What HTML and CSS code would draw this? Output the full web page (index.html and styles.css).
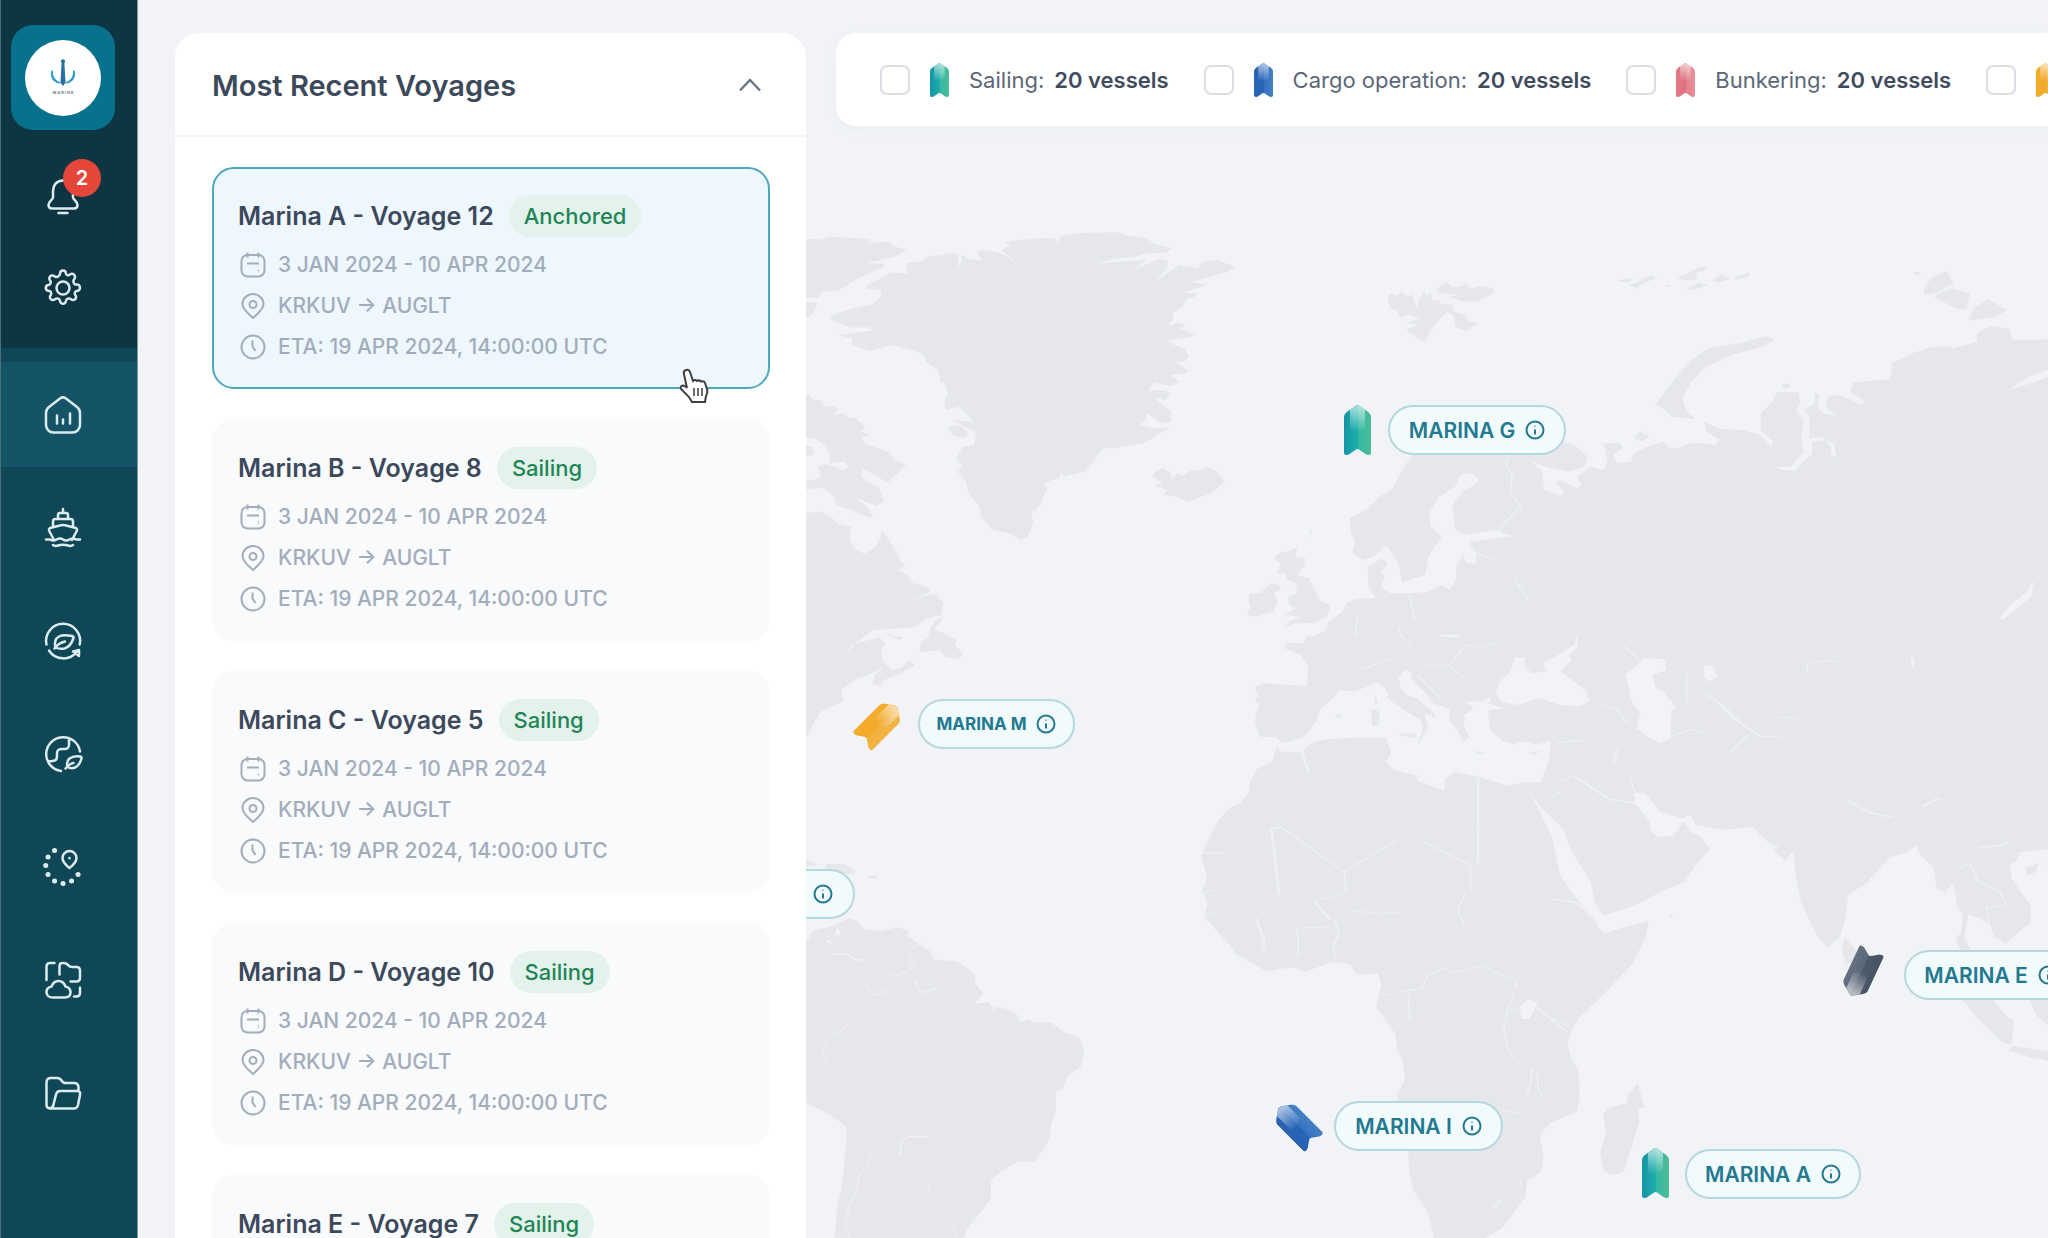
FILE: index.html
```html
<!DOCTYPE html>
<html lang="en">
<head>
<meta charset="utf-8">
<title>Marine fleet overview</title>
<link rel="stylesheet" href="styles.css">
</head>
<body>
<svg class="defs" aria-hidden="true">
  <defs>
    <linearGradient id="g-teal"><stop offset="0" stop-color="#1593a6"/><stop offset=".5" stop-color="#1cafab"/><stop offset=".55" stop-color="#35b9a4"/><stop offset="1" stop-color="#4dbb98"/></linearGradient>
    <linearGradient id="g-blue"><stop offset="0" stop-color="#2a62b0"/><stop offset=".5" stop-color="#2565b8"/><stop offset=".55" stop-color="#3672be"/><stop offset="1" stop-color="#4680c6"/></linearGradient>
    <linearGradient id="g-pink"><stop offset="0" stop-color="#e57885"/><stop offset=".5" stop-color="#dd7380"/><stop offset=".55" stop-color="#e38390"/><stop offset="1" stop-color="#e88f99"/></linearGradient>
    <linearGradient id="g-gold"><stop offset="0" stop-color="#f3ac2e"/><stop offset=".5" stop-color="#f2a927"/><stop offset=".55" stop-color="#f1b13c"/><stop offset="1" stop-color="#f2b548"/></linearGradient>
    <linearGradient id="g-slate"><stop offset="0" stop-color="#475465"/><stop offset=".5" stop-color="#4b5868"/><stop offset=".55" stop-color="#5b6878"/><stop offset="1" stop-color="#667282"/></linearGradient>
    <linearGradient id="g-shine" x1="0" y1="0" x2="0" y2="1"><stop offset="0" stop-color="#fff" stop-opacity=".65"/><stop offset="1" stop-color="#fff" stop-opacity="0"/></linearGradient>
    <path id="ribbon" d="M13.500 0Q14.500 0 15.500 1L23.500 6.500Q27 9 27 12V47.500Q27 50 24.500 50Q22 50 20 48L15 44.500Q13.500 43.500 12 44.500L7 48Q5 50 2.500 50Q0 50 0 47.500V12Q0 9 3.500 6.500L11.500 1Q12.500 0 13.500 0Z"/>
    <path id="shine" d="M13.500 0L21 5V22Q13 30 6 24V5Z" fill="url(#g-shine)"/>
    <symbol id="i-info" viewBox="0 0 20 20"><circle cx="10" cy="10" r="8.500"/><path d="M10 9.500v5M10 5.800v.6"/></symbol>
    <symbol id="i-cal" viewBox="0 0 26 26"><rect x="1.500" y="3" width="23" height="21.500" rx="6"/><path d="M7.500 .5v5M18.500 .5v5M7 11.500h12M18 18.500h1"/></symbol>
    <symbol id="i-pin" viewBox="0 0 26 26"><path d="M13 25C6.500 19.500 2.500 15.500 2.500 11a10.500 10 0 0 1 21 0c0 4.500-4 8.500-10.500 14z"/><circle cx="13" cy="11.500" r="3.500"/></symbol>
    <symbol id="i-clock" viewBox="0 0 26 26"><circle cx="13" cy="13" r="11.500"/><path d="M12.500 6.500v6l3 4.500"/></symbol>
  </defs>
</svg>

<div class="app">
  <nav class="sidebar" aria-label="Main">
    <div class="sidebar-top">
      <a class="logo" href="#" aria-label="Marine">
        <svg viewBox="0 0 75 75" aria-hidden="true">
          <circle cx="37.500" cy="37.500" r="37.500" fill="#fff"/>
          <path d="M36.300 20h2.400l1.300 22-2.500 3.500L35 42z" fill="#2a6f9e"/><circle cx="37.500" cy="21" r="2" fill="#2a6f9e"/>
          <path d="M27 30c-.5 7 4 11 8 12.500-5 0-9-3.500-9-10zM48 30c.5 7-4 11-8 12.500 5 0 9-3.500 9-10z" fill="#2c9bcf" stroke="#2c9bcf" stroke-width="1"/>
          <text x="37.500" y="53" text-anchor="middle" class="logo-name">M A R I N E</text>
        </svg>
      </a>
      <button class="side-btn bell" aria-label="Notifications, 2 new">
        <svg class="icon" viewBox="0 0 36 36"><path d="M18 2.500C11.500 2.500 8 7.500 8 13v6.500c0 2-4.500 4-4.500 7.500 0 2.500 1.500 3.500 3.500 3.500h22c2 0 3.500-1 3.500-3.500 0-3.500-4.500-5.500-4.500-7.500V13c0-5.500-3.500-10.500-10-10.500zM13.500 35h9"/></svg>
        <span class="badge">2</span>
      </button>
      <button class="side-btn" aria-label="Settings">
        <svg class="icon" viewBox="0 0 36 36"><path d="M15.200 3.200a2.800 2.800 0 0 1 5.600 0c.2 1.800 2.300 2.700 3.800 1.600a2.900 2.900 0 0 1 4.600 4.300c-1.500 1.800-.8 4.700 1.400 5.500a2.900 2.900 0 0 1 2.200 6.200c-2.700.2-3.800 2-2.600 4a2.900 2.900 0 0 1-4.300 4.300c-1.700-1.400-4.600-.4-5 1.800a2.900 2.900 0 0 1-5.800 0c-.4-2.200-3.300-3.200-5-1.800a2.900 2.900 0 0 1-4.300-4.300c1.200-2 .1-3.800-2.600-4a2.900 2.900 0 0 1 0-5.700c2.400-.4 3.300-2.700 2-4.500a2.900 2.900 0 0 1 4.200-4.300c2 1.400 5.400.2 5.800-3.100z"/><circle cx="18" cy="18" r="6.500"/></svg>
      </button>
    </div>
    <ul class="side-list">
      <li><a class="side-link active" href="#" aria-label="Dashboard"><svg class="icon" viewBox="0 0 36 36"><path d="M15 1.500a5 5 0 0 1 6 0l11 8.500a7.500 7.500 0 0 1 3 6v12a7.500 7.500 0 0 1-7.500 7.500h-19A7.500 7.500 0 0 1 1 28V16a7.500 7.500 0 0 1 3-6z"/><path d="M12 18.500v8M18 22.500v4M25 16.500v10"/></svg></a></li>
      <li><a class="side-link" href="#" aria-label="Vessels"><svg class="icon" viewBox="0 0 36 36"><path d="M18 -1v3.500M13 9V5q0-2 2-2h6q2 0 2 2v4M12 9h12M8 16v-4.500Q8 9 10.500 9h15Q28 9 28 11.500V16M9 30l-4.500-8.500Q3 18.500 6 17.700l10-2.500q2-.5 4 0l10 2.500q3 .8 1.500 3.800L27 30M1 29.500h4q3 2 6.500 0t6.500 0 6.500 0 6.500 0h4M8 35q2 1.500 5 .5 5-1.500 10 0 3 1 5-.5"/></svg></a></li>
      <li><a class="side-link" href="#" aria-label="Emissions"><svg class="icon" viewBox="0 0 36 36"><path d="M1.500 21.500A17 17 0 1 1 34.700 21.500M4 27.500A17 17 0 0 0 32 28.500M28 28.500l6-1.500v6zM10.500 24.500q-2-8 3.500-11 4-2 13-.5 2 .5 1.500 2-3 9-9 10.500-5 1-9-1zM9.500 25.500q4-5.500 10.500-7"/></svg></a></li>
      <li><a class="side-link" href="#" aria-label="Environment"><svg class="icon" viewBox="0 0 36 36"><path d="M35 15.500A17 17 0 1 0 16 35M24 2.500v6q0 5-5.500 4.500-6.500-.5-6.500 4v3q0 5-4.500 5-3 .5-5-.5M22.500 31q-1.500-5.500 2-8.500 4-3 10.500-2 2 .3 1.500 2-2 7-6.500 9-4 1.500-7.500-.5zM20.500 32.500q4-5 8-5.500"/></svg></a></li>
      <li><a class="side-link" href="#" aria-label="Routes"><svg class="icon" viewBox="0 0 36 36"><path d="M24.500 19q-7-5.500-7-10a7 7 0 0 1 14 0q0 4.500-7 10zM24.500 9v.2"/><path class="dots" d="M9.500 1.500h.1M3 8h.1M.7 16.500h.1M3 25.500h.1M9.500 32h.1M18 34.500h.1M26.500 32h.1M33 25.500h.1"/></svg></a></li>
      <li><a class="side-link" href="#" aria-label="Cloud files"><svg class="icon" viewBox="0 0 36 36"><path d="M1.500 18V4.500Q1.500 1 5 1h4.500M14.500 12.500V4q0-3 3-3 4-.3 6 2.500 1 1.500 4 1.500h4q3.500 0 3.500 3.500v7q0 4-3.500 4H25.500M35 25.500v5q0 4-3.500 4H29M8 35.500q-6 0-6.500-5-.2-5 5-6 2-5.500 7-5.500t7 5.500q5 1 5 6t-6 5z"/></svg></a></li>
      <li><a class="side-link" href="#" aria-label="Documents"><svg class="icon" viewBox="0 0 36 36"><path d="M5 33.500Q1.500 33 1.500 30V7.500Q1.500 3 6 3h6q3 0 4.500 2.500T20.500 8H29q4 0 4.500 4v4M5 33.500q3-.5 3.500-4L11 19.500q1-3.500 4-3.500h17q4 0 3 4l-2 10q-.8 3.500-4 3.500z"/></svg></a></li>
    </ul>
  </nav>

  <main class="main">
    <svg class="map" viewBox="137 0 1911 1238" preserveAspectRatio="xMinYMin slice" aria-hidden="true">
      <!-- Greenland, Arctic Canada, Labrador, Iceland -->
      <g class="land" transform="translate(800 200) scale(.3333)">
        <path d="M315,190 365,183 375,172 460,158 472,165 470,203 483,180 480,165 505,178 545,182 525,155 550,150 600,160 648,190 600,150 630,138 610,125 720,115 760,113 770,127 780,107 850,98 950,97 980,107 1040,115 1055,130 1112,145 1095,158 1040,160 1000,170 940,176 890,192 940,186 1035,180 997,211 1070,178 1100,180 1100,200 1065,242 1135,195 1190,205 1210,183 1250,181 1303,200 1280,215 1210,235 1170,245 1218,255 1190,265 1140,280 1190,278 1180,290 1155,300 1145,320 1118,335 1115,360 1103,377 1130,368 1158,377 1135,385 1182,405 1165,412 1095,420 1120,435 1150,445 1163,470 1155,483 1120,485 1163,512 1150,520 1108,525 1137,547 1110,558 1060,547 1042,573 1080,570 1107,578 1095,600 1060,595 1110,635 1110,665 1085,670 1035,640 1035,660 1015,675 1060,685 1105,683 1030,730 940,745 905,745 875,790 850,815 785,830 782,812 775,835 745,843 728,855 740,860 720,910 700,935 690,930 697,965 680,1010 660,1020 625,1000 575,990 540,950 535,920 500,875 498,850 470,815 485,800 465,775 485,740 520,735 525,695 500,685 455,660 520,665 475,620 435,630 430,600 442,585 430,550 418,545 412,510 375,485 365,462 330,450 270,435 205,453 155,435 152,415 112,405 215,392 205,382 150,383 115,370 85,353 100,343 155,325 215,313 240,290 240,272 195,265 200,255 270,218 320,220Z"/>
        <path d="M442,685 460,675 485,680 502,702 490,716 455,705Z"/>
        <path d="M0,118 60,118 85,110 140,113 205,118 200,130 265,125 275,137 318,150 280,170 195,190 250,192 245,203 180,230 110,272 65,275 50,293 0,290ZM0,303 48,308 40,335 18,355 0,355Z"/>
        <path d="M0,580 25,585 35,600 55,600 75,620 105,620 108,632 95,645 125,640 145,655 165,653 170,665 190,675 188,690 175,690 205,705 180,712 190,730 265,757 280,780 315,795 290,820 260,848 185,803 182,830 200,845 235,865 250,905 225,917 165,895 200,920 215,950 195,950 150,930 105,915 100,890 70,865 40,865 0,870 0,845 40,840 60,830 52,800 70,793 105,800 125,812 145,800 130,785 85,790 87,765 70,735 40,715 0,712ZM0,735 35,740 38,765 0,770Z"/>
        <path d="M0,940 60,935 90,950 110,972 150,980 145,1020 160,1045 190,1062 225,1040 245,993 270,1030 310,1098 290,1110 325,1130 330,1147 388,1165 385,1175 335,1200 400,1180 428,1210 420,1245 375,1255 340,1283 215,1290 190,1310 150,1340 120,1375 165,1330 235,1313 253,1328 240,1350 245,1385 270,1408 300,1405 325,1380 342,1395 310,1415 250,1440 240,1457 215,1453 218,1430 245,1405 190,1430 165,1435 120,1470 128,1505 95,1520 60,1535 35,1575 18,1610 0,1650Z"/>
        <path d="M425,1255 400,1290 430,1300 465,1320 462,1335 485,1360 475,1378 430,1370 415,1350 355,1358 360,1325 380,1315 390,1280 410,1257ZM250,1300 305,1315 295,1320Z"/>
        <path d="M1055,830 1065,812 1085,803 1110,820 1112,838 1130,820 1145,828 1165,813 1205,810 1215,800 1250,815 1270,845 1230,880 1160,906 1120,888 1085,885 1100,870 1060,857 1085,848Z"/>
      </g>
      <!-- South America and the Caribbean -->
      <g transform="translate(800 680) scale(.3333 .3559)">
        <path class="land" d="M0,720 18,735 35,705 100,690 120,680 145,668 175,680 185,700 240,705 290,695 325,705 320,720 360,745 385,760 400,785 470,790 520,825 525,855 547,882 520,910 565,905 575,925 560,945 585,918 620,925 655,945 655,962 680,953 705,962 750,962 790,990 835,1005 850,1045 840,1085 800,1115 785,1150 765,1155 765,1210 750,1250 748,1285 720,1330 700,1353 655,1352 600,1380 570,1405 570,1455 545,1490 500,1540 485,1575 100,1575 110,1470 120,1440 130,1360 138,1270 130,1250 85,1220 20,1190 0,1180ZM75,518 130,518 165,538 160,545 75,540ZM0,500 30,508 50,522 0,525ZM200,550 230,550 228,557 205,557Z"/>
        <path class="water" d="M100,718 110,692 120,718ZM75,735 85,730 95,745Z"/>
        <path class="border b-wide" d="M95,770 140,770 160,785 192,787M345,845 352,868 370,878 410,865M295,1335 302,1295 320,1283 380,1284"/>
        <path class="border" d="M362,742 335,750 325,785 340,805 355,828M250,822 285,830 320,820 335,805M195,855 215,885 240,883 272,860M140,965 125,985 85,1000 62,1045 80,1080M212,1335 195,1370 175,1390 165,1440 145,1480 132,1525 145,1575M430,1515 462,1540 465,1575M405,1500 415,1512M392,1405 380,1435M515,1500 510,1525"/>
      </g>
      <!-- Africa, Arabia and South Asia -->
      <g transform="translate(1180 700) scale(.5536 .3431)">
        <path class="land" d="M172,138 165,180 138,200 125,235 122,270 108,300 90,312 68,350 50,405 37,455 47,520 38,555 48,590 42,630 60,665 80,700 100,740 155,792 180,783 205,780 225,792 273,763 305,770 318,800 355,797 362,830 352,895 388,975 390,1020 400,1050 405,1105 390,1150 395,1250 410,1310 412,1370 420,1430 445,1490 458,1570 548,1570 580,1540 622,1450 625,1400 650,1375 655,1330 648,1270 665,1235 715,1200 720,1160 718,1080 705,1045 698,1000 705,965 720,925 765,855 815,770 840,690 845,645 800,662 765,680 750,655 755,630 762,628 820,600 865,560 910,530 930,480 955,435 940,400 920,385 908,355 890,395 862,400 850,385 845,350 820,300 818,270 838,270 865,325 905,345 920,335 930,365 980,378 1033,370 1050,400 1065,420 1080,428 1068,435 1090,468 1107,440 1110,510 1120,590 1150,690 1168,722 1190,690 1200,640 1205,570 1240,530 1280,460 1310,445 1328,425 1335,450 1360,490 1365,550 1380,560 1393,535 1400,570 1400,600 1412,625 1410,670 1400,700 1410,740 1430,740 1415,690 1422,625 1440,635 1460,650 1470,690 1490,710 1510,680 1535,650 1535,600 1500,520 1498,480 1520,455 1510,445 1568,435 1600,430 1600,-5 145,-5 133,60 143,107 172,108 182,125Z"/>
        <path class="land" d="M1408,868 1465,868 1490,920 1505,935 1500,1005 1485,1000 1440,930ZM1502,1008 1530,1015 1568,1025 1568,1052 1530,1040 1495,1020ZM1532,868 1568,868 1568,950 1545,920ZM1198,690 1220,730 1220,765 1200,768 1194,735ZM825,1118 838,1190 825,1190 828,1230 800,1375 780,1385 765,1375 757,1320 768,1260 762,1210 770,1190 805,1175 808,1150ZM880,625 890,625 886,634Z"/>
        <path class="water" d="M628,268 650,312 690,375 705,440 740,530 748,590 762,628 755,660 740,625 705,560 685,510 670,400 645,315ZM612,895 625,873 645,880 630,930 615,930Z"/>
      </g>
      <!-- Europe and Northern Asia -->
      <g class="land" transform="translate(1200 230) scale(.5408 .3333)">
        <path d="M100,1420 105,1390 98,1372 115,1360 195,1368 198,1310 185,1275 155,1255 158,1238 190,1240 195,1215 210,1218 232,1200 235,1175 262,1145 268,1120 285,1108 322,1103 310,1070 308,1010 318,985 300,990 280,970 285,935 277,910 275,865 305,840 330,800 355,775 365,740 380,700 395,670 430,640 500,610 600,600 660,630 690,645 715,680 710,710 680,725 640,712 605,690 630,720 635,780 665,797 672,785 655,755 665,750 695,775 703,765 695,740 720,710 745,720 752,690 748,670 745,640 775,640 780,655 762,675 770,700 795,695 800,670 825,650 855,635 865,655 880,655 905,640 930,640 950,645 960,630 935,605 930,575 960,597 1000,600 1035,615 1055,650 1058,635 1035,600 1035,550 1055,520 1065,485 1105,487 1108,520 1100,540 1115,570 1110,625 1115,665 1090,712 1060,708 1070,718 1098,722 1130,670 1130,635 1155,630 1165,650 1165,675 1175,682 1170,640 1145,622 1125,625 1125,560 1115,540 1135,520 1135,487 1145,500 1140,530 1150,550 1175,557 1155,530 1160,500 1180,495 1220,525 1228,515 1200,485 1205,458 1275,447 1278,400 1315,370 1350,352 1385,348 1390,355 1435,335 1435,310 1460,288 1495,297 1500,330 1568,328 1600,328 1600,1420Z"/>
        <path d="M160,965 178,950 175,980 193,985 190,1010 178,1035 200,1045 210,1080 222,1115 240,1125 232,1160 210,1180 175,1180 152,1195 165,1172 185,1160 155,1155 175,1135 162,1125 162,1100 178,1090 175,1060 155,1045 158,1030 140,1030 148,1005 135,985 142,970ZM90,1090 110,1088 130,1060 145,1065 148,1080 135,1090 142,1115 135,1145 100,1160 85,1155 92,1130 88,1110ZM200,895 205,900 202,920Z"/>
        <path d="M345,205 350,190 362,198 370,185 382,200 390,192 398,235 404,205 412,182 418,198 425,188 428,212 440,208 442,220 465,225 470,245 490,255 492,272 512,280 490,303 470,290 468,260 455,245 440,270 425,300 413,335 385,310 380,295 405,285 380,280 405,265 385,255 370,262 360,240 350,235ZM432,165 440,178 445,162 455,158 465,172 480,170 490,160 500,175 515,168 540,175 540,190 510,215 480,213 460,200 475,195 440,190Z"/>
        <path d="M768,152 800,143 790,158ZM790,165 810,155 830,135 842,145 820,158 805,175ZM880,145 905,125 920,112 935,112 930,123 915,130 918,148 895,152ZM898,175 920,158 938,165 910,180ZM945,155 962,133 978,148 960,157ZM985,142 1015,127 1012,140 990,150ZM855,168 865,165 868,172Z"/>
        <path d="M840,525 860,480 880,440 905,390 940,355 1000,338 1045,318 1060,330 1040,350 980,375 930,415 905,460 890,505 897,540 915,568 870,560 855,535ZM800,625 812,605 828,620 815,635ZM1072,465 1085,460 1092,470 1078,478Z"/>
        <path d="M1335,180 1350,145 1378,122 1392,160 1365,185 1340,195ZM1355,200 1385,175 1422,190 1415,238 1395,235ZM1418,272 1430,235 1455,208 1490,240 1470,260ZM1316,126 1330,126 1326,138Z"/>
      </g>
      <!-- Inland seas of Europe -->
      <g class="water" transform="translate(1200 230) scale(.5408 .3333)">
        <path d="M470,770 480,735 500,730 515,750 500,770 485,785 465,825 470,900 490,915 545,900 555,908 575,918 500,935 495,945 508,965 508,1000 490,1000 485,970 472,1010 472,1050 460,1080 445,1065 420,1085 390,1090 375,1090 350,1090 333,1070 340,1040 333,1030 345,1000 335,985 308,1010 300,990 320,980 343,945 365,1000 372,1055 415,1035 420,980 445,920 425,890 422,850 440,800Z"/>
        <path d="M545,1390 552,1355 570,1330 582,1280 600,1285 598,1310 612,1330 640,1325 632,1300 660,1275 690,1245 695,1215 697,1250 680,1275 685,1290 665,1325 690,1355 712,1380 718,1415 700,1428 665,1425 625,1405 585,1425 555,1415Z"/>
        <path d="M490,1413 520,1415 540,1398 530,1420 560,1435 530,1442 535,1500 510,1500 485,1455 505,1440Z"/>
        <path d="M785,1335 820,1285 858,1288 860,1320 835,1335 840,1370 860,1390 865,1410 880,1435 862,1440 868,1500 805,1500 812,1450 795,1410 790,1370Z"/>
        <path d="M208,1500 220,1440 240,1410 258,1380 285,1385 325,1358 340,1375 352,1412 405,1465 412,1500Z"/>
        <path d="M365,1345 378,1318 390,1330 388,1348 412,1385 430,1420 450,1440 470,1500 450,1500 420,1450 395,1425 370,1375Z"/>
        <path d="M1475,1168 1500,1120 1525,1090 1540,1052 1535,1100 1505,1140 1485,1168ZM1493,480 1530,440 1568,418 1568,440 1535,460ZM930,1310 945,1305 955,1340 940,1355 930,1340ZM440,1213 480,1215 475,1223 445,1220ZM1312,1268 1320,1295 1315,1320Z"/>
      </g>
      <g transform="translate(1180 700) scale(.5536 .3431)">
        <path class="water" d="M182,125 200,120 225,105 245,60 250,30 272,-2 378,-2 430,-2 485,25 485,60 500,90 510,120 522,110 510,75 515,40 530,25 555,20 555,60 560,90 580,118 600,130 620,120 640,130 668,120 665,170 650,240 620,240 590,250 540,225 495,210 478,230 475,262 430,240 425,220 385,205 370,180 380,155 370,110 310,110 260,115 235,125 218,152 180,150 170,130ZM825,0 888,0 885,60 885,110 865,125 840,105 825,80 830,40Z"/>
        <path class="land" d="M370,-12 385,10 432,58 437,80 428,130 446,80 440,40 462,52 455,35 425,-5 410,-12ZM393,98 422,98 425,112 400,105ZM343,30 358,25 358,72 345,75ZM350,-20 356,10 350,12ZM278,46 286,40 290,48 284,53ZM525,148 552,155 540,160ZM628,155 652,146 638,160Z"/>
        <path class="border b-wide" d="M163,370 178,568M163,375 182,370M38,446 80,446M135,635 150,700 148,730M240,587 270,640M537,228 537,475M218,150 230,212M710,222 775,290 820,300M965,0 1000,55 1045,105M1203,293 1245,328 1288,344M1338,312 1368,285 1375,290M1440,430 1480,425 1495,412M670,580 715,590 745,635M787,145 783,180M680,126 730,116"/>
        <path class="border" d="M182,372 295,500 388,410M435,410 523,483V560M515,560 500,610 512,660M295,500 298,560 240,587M305,612 350,622 400,620M278,640 285,680 275,720 278,755M210,665 270,660M210,665 212,745M365,860 380,860M400,850 435,840 445,805 475,780 490,795 545,775 568,795 605,812 607,840M600,860 590,905 583,960 590,1010 600,1045M590,905 640,895 700,970M640,890 665,925 700,950M635,1075 632,1110 625,1150M642,1080 645,1130 652,1160M580,1195 620,1208M565,1480 575,1458 580,1470M612,1395 615,1420M410,860 413,930M705,222 680,240M690,260 665,290M810,220 820,270M888,105 920,85 950,98M990,155 1025,100M1045,105 1085,108M1405,490 1425,478 1440,530 1480,560 1490,600 1455,605 1460,650M760,10 785,25 805,65M40,560 68,553M45,625 70,620"/>
        <path class="water" d="M1505,480 1520,440 1535,450 1560,440 1560,500 1535,530 1510,520Z"/>
        <path class="land" d="M1525,490 1550,475 1545,500 1530,512Z"/>
      </g>
      <g class="border" transform="translate(1200 230) scale(.5408 .3333)">
        <path d="M572,675 563,695 575,735 573,790 592,830 560,880 550,905M385,1090 395,1170M365,1190 370,1220 388,1240M495,945 510,970 540,990M460,1305 488,1245 520,1250 550,1235M415,1305 460,1308 490,1350M580,1045 605,1110M300,1315 360,1285M400,1335 440,1400M290,1160 285,1215M898,1330V1420M1120,1330 1122,1300 1150,1293 1180,1295M930,1390 965,1425 1000,1480M780,1245 810,1290M1060,1460 1105,1467"/>
      </g>
    </svg>

    <div class="pins">
      <svg class="ribbon r-g" viewBox="0 0 27 50"><use href="#ribbon" fill="url(#g-teal)"/><use href="#shine"/></svg>
      <button class="pin p-g">MARINA G <svg class="info"><use href="#i-info"/></svg></button>
      <svg class="ribbon r-m" viewBox="0 0 27 50"><use href="#ribbon" fill="url(#g-gold)"/><use href="#shine"/></svg>
      <button class="pin small p-m">MARINA M <svg class="info"><use href="#i-info"/></svg></button>
      <button class="pin p-b">MARINA B <svg class="info"><use href="#i-info"/></svg></button>
      <svg class="ribbon r-e" viewBox="0 0 27 50"><use href="#ribbon" fill="url(#g-slate)"/><use href="#shine"/></svg>
      <button class="pin p-e">MARINA E <svg class="info"><use href="#i-info"/></svg></button>
      <svg class="ribbon r-i" viewBox="0 0 27 50"><use href="#ribbon" fill="url(#g-blue)"/><use href="#shine"/></svg>
      <button class="pin p-i">MARINA I <svg class="info"><use href="#i-info"/></svg></button>
      <svg class="ribbon r-a" viewBox="0 0 27 50"><use href="#ribbon" fill="url(#g-teal)"/><use href="#shine"/></svg>
      <button class="pin p-a">MARINA A <svg class="info"><use href="#i-info"/></svg></button>
    </div>

    <section class="panel" aria-labelledby="voyages-title">
      <header class="panel-head">
        <h1 id="voyages-title">Most Recent Voyages</h1>
        <button class="collapse" aria-label="Collapse"><svg viewBox="0 0 24 14"><path d="M2 12.500 12 2l10 10.500"/></svg></button>
      </header>
      <div class="cards">
        <article class="card selected">
          <h2>Marina A - Voyage 12 <span class="status">Anchored</span></h2>
          <p><svg><use href="#i-cal"/></svg>3 JAN 2024 - 10 APR 2024</p>
          <p><svg><use href="#i-pin"/></svg>KRKUV → AUGLT</p>
          <p><svg><use href="#i-clock"/></svg>ETA: 19 APR 2024, 14:00:00 UTC</p>
          <svg class="cursor" viewBox="0 0 30 36" aria-hidden="true"><path d="M7 2q3-1 4 2l3 9q2-2 4 0 2-1.500 4 .5 3-1 4 1.500l2 6q1 4-1 7l-1 6H13l-3-5q-5-5-8-8-1-3 2-3.500 2 0 4 2.500L5 6q-1-3 2-4z" fill="#fff" stroke="#3d3f42" stroke-width="2"/><path d="M15 20v8M19 20v8M23 20v8" stroke="#3d3f42" stroke-width="1.500"/></svg>
        </article>
        <article class="card">
          <h2>Marina B - Voyage 8 <span class="status">Sailing</span></h2>
          <p><svg><use href="#i-cal"/></svg>3 JAN 2024 - 10 APR 2024</p>
          <p><svg><use href="#i-pin"/></svg>KRKUV → AUGLT</p>
          <p><svg><use href="#i-clock"/></svg>ETA: 19 APR 2024, 14:00:00 UTC</p>
        </article>
        <article class="card">
          <h2>Marina C - Voyage 5 <span class="status">Sailing</span></h2>
          <p><svg><use href="#i-cal"/></svg>3 JAN 2024 - 10 APR 2024</p>
          <p><svg><use href="#i-pin"/></svg>KRKUV → AUGLT</p>
          <p><svg><use href="#i-clock"/></svg>ETA: 19 APR 2024, 14:00:00 UTC</p>
        </article>
        <article class="card">
          <h2>Marina D - Voyage 10 <span class="status">Sailing</span></h2>
          <p><svg><use href="#i-cal"/></svg>3 JAN 2024 - 10 APR 2024</p>
          <p><svg><use href="#i-pin"/></svg>KRKUV → AUGLT</p>
          <p><svg><use href="#i-clock"/></svg>ETA: 19 APR 2024, 14:00:00 UTC</p>
        </article>
        <article class="card">
          <h2>Marina E - Voyage 7 <span class="status">Sailing</span></h2>
        </article>
      </div>
    </section>

    <div class="legend">
      <label><input type="checkbox"><svg viewBox="0 0 27 50" preserveAspectRatio="none"><use href="#ribbon" fill="url(#g-teal)"/><use href="#shine"/></svg><span>Sailing:</span><b>20 vessels</b></label>
      <label><input type="checkbox"><svg viewBox="0 0 27 50" preserveAspectRatio="none"><use href="#ribbon" fill="url(#g-blue)"/><use href="#shine"/></svg><span>Cargo operation:</span><b>20 vessels</b></label>
      <label><input type="checkbox"><svg viewBox="0 0 27 50" preserveAspectRatio="none"><use href="#ribbon" fill="url(#g-pink)"/><use href="#shine"/></svg><span>Bunkering:</span><b>20 vessels</b></label>
      <label><input type="checkbox" aria-label="Anchored"><svg viewBox="0 0 27 50" preserveAspectRatio="none"><use href="#ribbon" fill="url(#g-gold)"/><use href="#shine"/></svg></label>
    </div>
  </main>
</div>
</body>
</html>
```
FILE: styles.css
```css
* { box-sizing: border-box; }

body {
  margin: 0;
  background: #f1f3f7;
  color: #3c495b;
  font-family: Inter, "Liberation Sans", sans-serif;
}

button {
  border: 0;
  padding: 0;
  background: none;
  font: inherit;
  color: inherit;
  cursor: pointer;
}

.defs { position: absolute; width: 0; height: 0; }

.app {
  display: flex;
  height: 100vh;
  overflow: hidden;
}

/* Sidebar */
.sidebar {
  flex: none;
  width: 138px;
  border-left: 1px solid #48707b;
  border-right: 1px solid #7d98a1;
  background: #0f4757;
}

.sidebar-top {
  display: flex;
  flex-direction: column;
  align-items: center;
  height: 348px;
  padding: 25px 12px 0 0;
  background: #0d3642;
}

.logo {
  display: grid;
  place-items: center;
  width: 104px;
  height: 105px;
  border-radius: 22px;
  background: #08718e;
}

.logo svg { width: 76px; height: 76px; }

.logo-name { font-size: 4px; font-weight: 600; fill: #6a6e73; }

.side-btn {
  position: relative;
  display: grid;
  place-items: center;
  width: 92px;
  height: 92px;
}

.bell { margin-top: 20px; }

.badge {
  position: absolute;
  top: 9px;
  left: 46px;
  width: 38px;
  height: 38px;
  border-radius: 50%;
  background: #e44639;
  color: #fff;
  font-size: 20px;
  font-weight: 600;
  line-height: 38px;
  text-align: center;
}

.side-list {
  display: flex;
  flex-direction: column;
  gap: 8px;
  margin: 0;
  padding: 14px 0 0;
  list-style: none;
}

.side-link {
  display: grid;
  place-items: center;
  height: 105px;
  padding-right: 12px;
}

.active { background: #155366; }

.icon {
  width: 36px;
  height: 36px;
  overflow: visible;
  fill: none;
  stroke: #dcebef;
  stroke-width: 2.500;
  stroke-linecap: round;
  stroke-linejoin: round;
}

.icon .dots { stroke-width: 5; }

/* Map */
.main {
  position: relative;
  display: flex;
  flex: 1;
  gap: 30px;
  align-items: flex-start;
  min-width: 0;
  padding: 33px 0 0 37px;
  overflow: hidden;
}

.map {
  position: absolute;
  top: 0;
  left: 0;
  width: 100%;
  height: 100%;
}

.land { fill: #e5e7eb; }
.water { fill: #f1f3f7; }

.border {
  fill: none;
  stroke: #eef0f4;
  stroke-width: 3;
  stroke-linejoin: round;
}

.b-wide { stroke-width: 5; }

.pins {
  position: absolute;
  inset: 0;
  overflow: hidden;
}

.ribbon {
  position: absolute;
  width: 27px;
  height: 50px;
}

.pin {
  position: absolute;
  display: flex;
  align-items: center;
  justify-content: center;
  gap: 10px;
  height: 50px;
  border: 2px solid #b7d7df;
  border-radius: 25px;
  background: #f1fafd;
  color: #23798f;
  font-size: 21px;
  font-weight: 600;
  white-space: nowrap;
}

.pin.small { font-size: 17px; font-weight: 700; }

.info {
  width: 20px;
  height: 20px;
  fill: none;
  stroke: #23798f;
  stroke-width: 2;
}

.r-g { left: 1206px; top: 405px; }
.p-g { left: 1250px; top: 405px; width: 178px; }
.r-m { left: 728px; top: 699px; transform: rotate(45deg); }
.p-m { left: 780px; top: 699px; width: 157px; }
.p-b { left: 539px; top: 869px; width: 178px; }
.r-e { left: 1710px; top: 948px; transform: rotate(205deg); }
.p-e { left: 1766px; top: 950px; width: 174px; }
.r-i { left: 1145px; top: 1100px; transform: rotate(-45deg); }
.p-i { left: 1196px; top: 1101px; width: 169px; }
.r-a { left: 1504px; top: 1148px; }
.p-a { left: 1547px; top: 1149px; width: 176px; }

/* Voyages panel */
.panel {
  position: relative;
  flex: none;
  width: 631px;
  border-radius: 24px 24px 0 0;
  background: #fff;
}

.panel-head {
  display: flex;
  align-items: center;
  justify-content: space-between;
  height: 104px;
  padding: 2px 44px 0 37px;
  border-bottom: 2px solid #f3f4f6;
}

h1 {
  margin: 0;
  font-size: 29px;
  font-weight: 600;
}

.collapse svg {
  display: block;
  width: 24px;
  height: 14px;
  fill: none;
  stroke: #6c7787;
  stroke-width: 2.500;
}

.cards {
  display: flex;
  flex-direction: column;
  gap: 30px;
  padding: 30px 36px 30px 37px;
}

.card {
  position: relative;
  height: 222px;
  padding: 26px 24px;
  border: 2px solid #f9fafc;
  border-radius: 22px;
  background: #f9fafc;
}

.selected {
  border-color: #4ba8bd;
  background: #eef7fd;
}

h2 {
  display: flex;
  align-items: center;
  gap: 15px;
  height: 42px;
  margin: 0 0 7px;
  font-size: 25px;
  font-weight: 600;
}

.status {
  padding: 0 15px;
  border-radius: 21px;
  background: #e3f3eb;
  color: #1f8557;
  font-size: 22px;
  font-weight: 500;
  line-height: 42px;
}

.card p {
  display: flex;
  align-items: center;
  gap: 12px;
  height: 41px;
  margin: 0;
  padding-left: 2px;
  color: #a2adbb;
  font-size: 21px;
  font-weight: 500;
}

.card p svg {
  width: 26px;
  height: 26px;
  fill: none;
  stroke: #a2adbb;
  stroke-width: 2;
}

.cursor {
  position: absolute;
  top: 199px;
  left: 465px;
  width: 30px;
  height: 36px;
  fill: none;
}

/* Status filters */
.legend {
  position: relative;
  display: flex;
  flex: 1;
  gap: 35px;
  align-items: center;
  min-width: 0;
  height: 93px;
  padding-left: 44px;
  border-radius: 20px 0 0 20px;
  background: #fff;
  overflow: hidden;
  box-shadow: 0 4px 8px #eceef2;
}

.legend label {
  display: flex;
  flex: none;
  align-items: center;
  color: #5b6777;
  font-size: 22px;
  white-space: nowrap;
}

.legend input {
  appearance: none;
  width: 30px;
  height: 30px;
  margin: 0 20px 0 0;
  border: 2px solid #dcdee6;
  border-radius: 7px;
  background: #fff;
}

.legend svg { width: 19px; height: 34px; margin-right: 20px; }

.legend b { margin-left: 10px; color: #3f4c5e; font-weight: 600; }
```
